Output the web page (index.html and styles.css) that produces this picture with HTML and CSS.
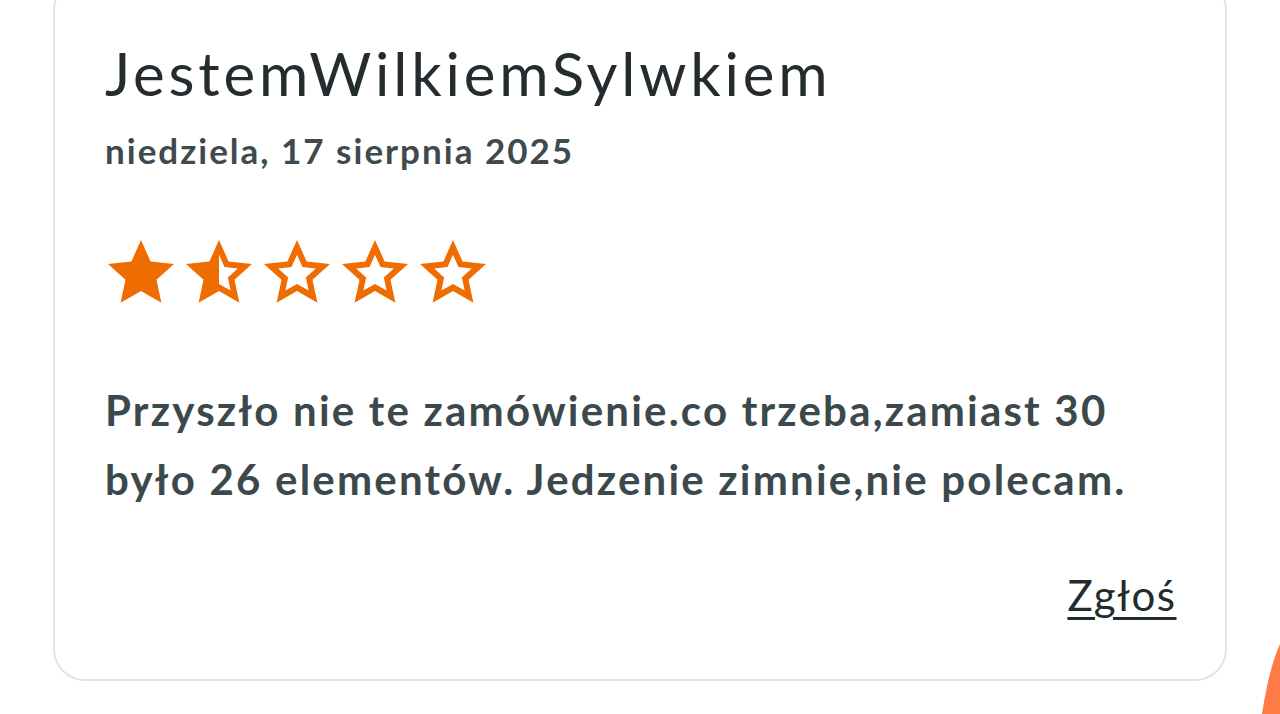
FILE: index.html
```html
<!DOCTYPE html>
<html lang="pl">
<head>
<meta charset="utf-8">
<title>Opinia</title>
<link rel="stylesheet" href="styles.css">
</head>
<body>
<div class="page">
  <article class="card">
    <h2 class="author">JestemWilkiemSylwkiem</h2>
    <div class="date">niedziela, 17 sierpnia 2025</div>
    <div class="stars" aria-label="1.5 z 5">
      <svg width="0" height="0" class="defs">
        <defs>
          <path id="star" d="M12 2 L14.763 8.198 L21.511 8.91 L16.47 13.452 L17.878 20.09 L12 16.7 L6.122 20.09 L7.53 13.452 L2.489 8.91 L9.237 8.198 Z"/>
          <clipPath id="righthalf"><rect x="12" y="0" width="12" height="24"/></clipPath>
        </defs>
      </svg>
      <svg class="star" viewBox="2.2 1.8 19.6 18.6"><use href="#star" class="fill"/></svg>
      <svg class="star" viewBox="2.2 1.8 19.6 18.6"><use href="#star" class="fill"/><g clip-path="url(#righthalf)"><use href="#star" class="hole" transform="translate(12 12) scale(0.57) translate(-12 -12)"/></g></svg>
      <svg class="star" viewBox="2.2 1.8 19.6 18.6"><use href="#star" class="fill"/><use href="#star" class="hole" transform="translate(12 12) scale(0.57) translate(-12 -12)"/></svg>
      <svg class="star" viewBox="2.2 1.8 19.6 18.6"><use href="#star" class="fill"/><use href="#star" class="hole" transform="translate(12 12) scale(0.57) translate(-12 -12)"/></svg>
      <svg class="star" viewBox="2.2 1.8 19.6 18.6"><use href="#star" class="fill"/><use href="#star" class="hole" transform="translate(12 12) scale(0.57) translate(-12 -12)"/></svg>
    </div>
    <p class="review">Przyszło nie te zamówienie.co trzeba,zamiast 30<br>było 26 elementów. Jedzenie zimnie,nie polecam.</p>
    <div class="actions"><a class="report" href="#">Zgłoś</a></div>
  </article>
  <svg class="fab" width="20" height="70" viewBox="0 0 20 70"><path d="M20 0 Q9 24 2 70 L20 70 Z" fill="#ff7b45"/></svg>
</div>
</body>
</html>
```
FILE: styles.css
```css
html, body {
  margin: 0;
  padding: 0;
  background: #ffffff;
  height: 714px;
  overflow: hidden;
}
.page {
  position: relative;
  display: flow-root;
  height: 714px;
  font-family: Lato, "Open Sans", sans-serif;
}
.card {
  box-sizing: border-box;
  width: 1174px;
  margin: -22px 0 0 53px;
  border: 2px solid #e5e3dd;
  border-radius: 32px;
  padding: 57px 50px 59px 50px;
}
.author {
  margin: 0;
  font-size: 60px;
  line-height: 72px;
  font-weight: 400;
  letter-spacing: 3.8px;
  color: #242c2f;
}
.date {
  margin-top: 19px;
  font-size: 35px;
  line-height: 44px;
  font-weight: 700;
  letter-spacing: 2px;
  color: #3e4a4d;
}
.stars {
  margin-top: 67px;
  display: flex;
  gap: 10px;
  height: 65px;
  margin-left: 2px;
}
.defs { position: absolute; }
.star {
  width: 68px;
  height: 65px;
}
.fill { fill: #ef6c00; }
.hole { fill: #ffffff; }
.review {
  margin: 72px 0 0;
  font-size: 42px;
  line-height: 69px;
  font-weight: 700;
  letter-spacing: 2.2px;
  color: #3c494c;
}
.actions {
  margin-top: 56px;
  display: flex;
  justify-content: flex-end;
}
.report {
  font-size: 42px;
  line-height: 50px;
  letter-spacing: 1.5px;
  margin-right: -1.5px;
  color: #222b2e;
  text-decoration: underline;
  text-decoration-thickness: 3px;
  text-underline-offset: 6px;
}
.fab {
  position: absolute;
  right: 0;
  bottom: 0;
}
```
